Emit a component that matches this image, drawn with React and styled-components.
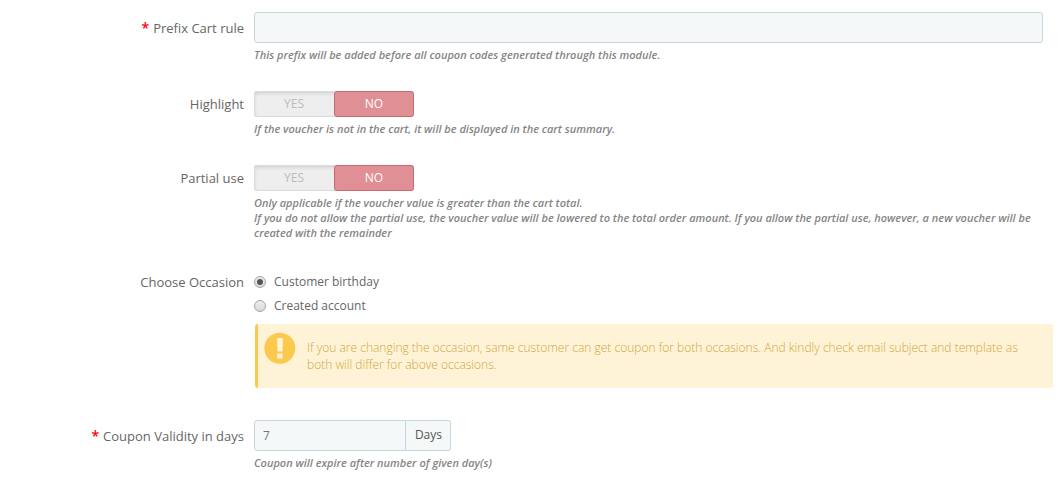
import React, { useState } from "react";
import styled, { createGlobalStyle, css } from "styled-components";

const GlobalStyle = createGlobalStyle`
  *, *::before, *::after { box-sizing: border-box; }
  body {
    margin: 0;
    background: #fff;
    color: #666;
    font: 400 12px/17px "Open Sans", sans-serif;
  }
`;

const Form = styled.form`
  display: flex;
  flex-direction: column;
  gap: 28px;
  padding: 12px 20px 16px 0;
`;

const Row = styled.div`
  display: grid;
  grid-template-columns: 244px minmax(0, 1fr);
  column-gap: 10px;
  align-items: start;
`;

const labelStyle = css`
  font-size: 13px;
  line-height: ${(p) => (p.$tall ? "32px" : "26px")};
  text-align: right;
`;

const FieldLabel = styled.label`
  ${labelStyle}
`;

const GroupLabel = styled.span`
  ${labelStyle}
`;

const Star = styled.span`
  color: #f00;
  font-size: 14px;
  font-weight: 600;
  margin-right: 4px;
`;

const Help = styled.p`
  margin: 4px 0 1px;
  color: #858585;
  font-size: 11px;
  font-style: italic;
  font-weight: 600;
  line-height: 15px;
`;

const TextInput = styled.input`
  display: block;
  width: 100%;
  min-width: 0;
  height: 31px;
  padding: 0 8px;
  border: 1px solid #c7d6db;
  border-radius: ${(p) => (p.$joined ? "3px 0 0 3px" : "3px")};
  background: #f5f8f9;
  color: #777;
  font: inherit;
`;

const InputGroup = styled.div`
  display: flex;
  width: 197px;
`;

const Addon = styled.span`
  flex: none;
  height: 31px;
  padding: 0 8px 0 9px;
  border: 1px solid #c7d6db;
  border-left: 0;
  border-radius: 0 3px 3px 0;
  background: #f5f8f9;
  color: #555;
  line-height: 28px;
`;

const Switch = styled.div`
  display: flex;
  width: 160px;
  height: 26px;
  border-radius: 3px;
  background: #eee;
  box-shadow: inset 0 0 0 1px #dcdcdc, inset 0 2px 4px rgba(0, 0, 0, 0.15);
`;

const SwitchButton = styled.button`
  flex: 1;
  padding: 0 0 1px;
  border: 1px solid ${(p) => (p.$active ? p.$edge : "transparent")};
  border-radius: 3px;
  background: ${(p) => (p.$active ? p.$fill : "transparent")};
  color: ${(p) => (p.$active ? "#fff" : "#bbb")};
  font: inherit;
  cursor: pointer;
`;

const RadioLine = styled.label`
  display: flex;
  align-items: center;
  gap: 8px;
  height: 24px;
`;

const Radio = styled.input`
  appearance: none;
  display: grid;
  place-items: center;
  width: 12px;
  height: 12px;
  margin: 1px 0 0;
  border: 1px solid #a5a5a5;
  border-radius: 50%;
  background: linear-gradient(#ededed, #d9d9d9);
  &:checked::before {
    content: "";
    width: 6px;
    height: 6px;
    border-radius: 50%;
    background: #555;
  }
`;

const Alert = styled.div`
  display: flex;
  align-items: flex-start;
  gap: 11px;
  min-height: 64px;
  margin: 7px -10px 4px 1px;
  padding: 8px 20px 8px 6px;
  border-left: 3px solid #fcc94f;
  border-radius: 3px;
  background: #fff3d7;
  color: #d2a63c;
  font-weight: 300;
  svg { flex: none; }
  p { margin: 7px 0 0; }
`;

function YesNo({ label, help }) {
  const [on, setOn] = useState(false);
  return (
    <Row>
      <GroupLabel>{label}</GroupLabel>
      <div>
        <Switch role="group" aria-label={label}>
          <SwitchButton type="button" aria-pressed={on} $active={on} $fill="#92d097" $edge="#72b578" onClick={() => setOn(true)}>
            YES
          </SwitchButton>
          <SwitchButton type="button" aria-pressed={!on} $active={!on} $fill="#e08f95" $edge="#c9686f" onClick={() => setOn(false)}>
            NO
          </SwitchButton>
        </Switch>
        <Help>{help}</Help>
      </div>
    </Row>
  );
}

export default function App() {
  return (
    <>
      <GlobalStyle />
      <Form>
        <Row>
          <FieldLabel htmlFor="prefix" $tall><Star>*</Star>Prefix Cart rule</FieldLabel>
          <div>
            <TextInput id="prefix" type="text" />
            <Help>This prefix will be added before all coupon codes generated through this module.</Help>
          </div>
        </Row>
        <YesNo label="Highlight" help="If the voucher is not in the cart, it will be displayed in the cart summary." />
        <YesNo
          label="Partial use"
          help={
            <>
              Only applicable if the voucher value is greater than the cart total.
              <br />
              If you do not allow the partial use, the voucher value will be lowered to the total order amount. If you allow
              the partial use, however, a new voucher will be created with the remainder
            </>
          }
        />
        <Row role="radiogroup" aria-labelledby="occasion">
          <GroupLabel id="occasion">Choose Occasion</GroupLabel>
          <div>
            <RadioLine>
              <Radio type="radio" name="occasion" value="birthday" defaultChecked />
              Customer birthday
            </RadioLine>
            <RadioLine>
              <Radio type="radio" name="occasion" value="account" />
              Created account
            </RadioLine>
            <Alert role="note">
              <svg width="32" height="32" viewBox="0 0 32 32" aria-hidden="true">
                <circle cx="15.8" cy="16.3" r="15.5" fill="#fcc94f" />
                <path d="M13 6h6l-.5 13.6h-5zM13.2 21.6h5.4v5h-5.4z" fill="#fff3d7" />
              </svg>
              <p>
                If you are changing the occasion, same customer can get coupon for both occasions. And kindly check email
                subject and template as both will differ for above occasions.
              </p>
            </Alert>
          </div>
        </Row>
        <Row>
          <FieldLabel htmlFor="validity" $tall><Star>*</Star>Coupon Validity in days</FieldLabel>
          <div>
            <InputGroup>
              <TextInput id="validity" type="text" defaultValue="7" $joined />
              <Addon>Days</Addon>
            </InputGroup>
            <Help>Coupon will expire after number of given day(s)</Help>
          </div>
        </Row>
      </Form>
    </>
  );
}
